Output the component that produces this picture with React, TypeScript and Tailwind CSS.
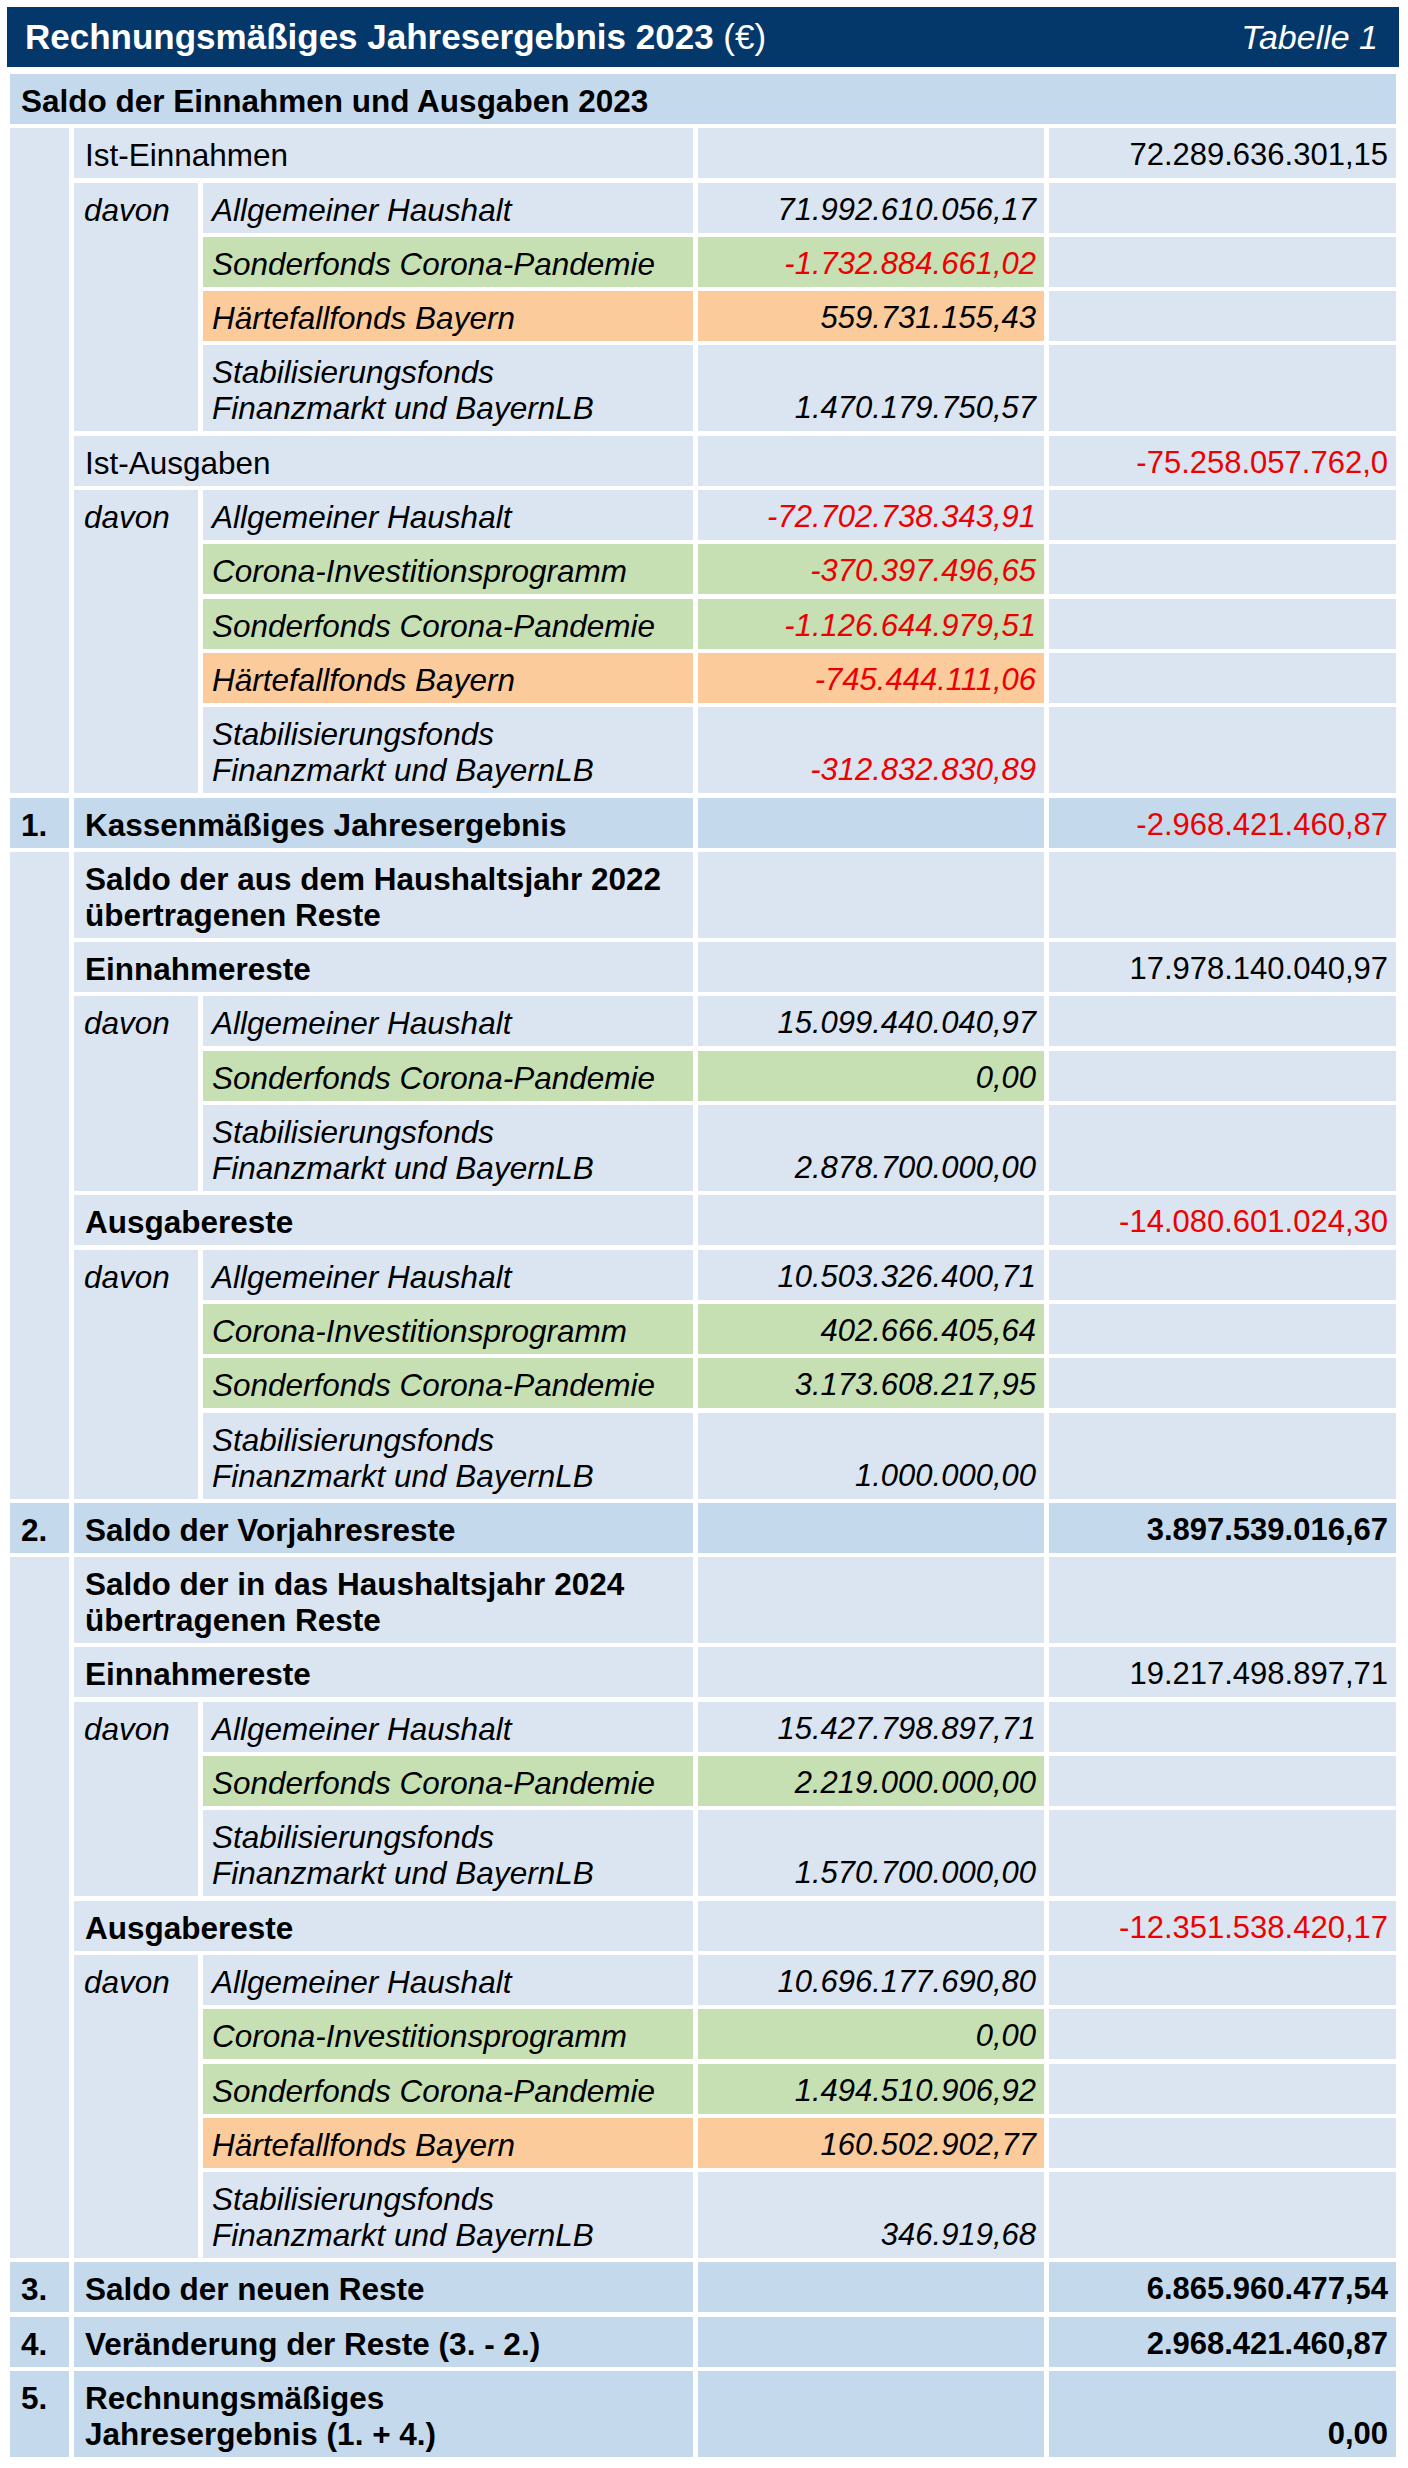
import React from "react";

type Bg = "l" | "m" | "g" | "o";
const BG: Record<Bg, string> = {
  l: "bg-[#dae5f1]",
  m: "bg-[#c5d9ec]",
  g: "bg-[#c6e0b4]",
  o: "bg-[#fbcb9c]",
};

const ROWSPAN: Record<number, string> = {
  3: "row-span-3",
  4: "row-span-4",
  5: "row-span-5",
  10: "row-span-10",
  11: "row-span-11",
};

type Sub = { label: string[]; value: string; bg?: Bg; red?: boolean };

function Label({
  children,
  bg = "l",
  span = "",
  tall = false,
  stretch = false,
  className = "",
}: {
  children?: React.ReactNode;
  bg?: Bg;
  span?: string;
  tall?: boolean;
  stretch?: boolean;
  className?: string;
}) {
  const h = stretch ? "" : tall ? "h-[86px]" : "h-[50px]";
  return (
    <div className={`${BG[bg]} ${span} ${h} pr-[8px] pt-[9px] leading-[36px] text-[31.5px] ${className}`}>
      {children}
    </div>
  );
}

function Value({
  children,
  bg = "l",
  className = "",
}: {
  children?: React.ReactNode;
  bg?: Bg;
  className?: string;
}) {
  return (
    <div
      className={`${BG[bg]} flex items-end justify-end pr-[8px] pb-[5px] leading-[36px] whitespace-nowrap ${className}`}
    >
      {children}
    </div>
  );
}

function SubRows({ items }: { items: Sub[] }) {
  return (
    <>
      <Label span={ROWSPAN[items.length]} stretch className="italic pl-[10px]">
        davon
      </Label>
      {items.map((it, i) => {
        const tall = it.label.length > 1;
        return (
          <React.Fragment key={i}>
            <Label bg={it.bg ?? "l"} tall={tall} className="italic whitespace-nowrap pl-[9px]">
              {it.label.map((l, j) => (
                <div key={j}>{l}</div>
              ))}
            </Label>
            <Value bg={it.bg ?? "l"} className={`italic ${it.red ? "text-[#ee0000]" : ""}`}>
              {it.value}
            </Value>
            <Value />
          </React.Fragment>
        );
      })}
    </>
  );
}

const STAB = ["Stabilisierungsfonds", "Finanzmarkt und BayernLB"];

function Group({
  label,
  labelClass = "",
  value,
  valueClass = "",
  tall = false,
}: {
  label: React.ReactNode;
  labelClass?: string;
  value?: string;
  valueClass?: string;
  tall?: boolean;
}) {
  return (
    <>
      <Label span="col-span-2" tall={tall} className={`whitespace-nowrap pl-[11px] ${labelClass}`}>
        {label}
      </Label>
      <Value />
      <Value className={valueClass}>{value}</Value>
    </>
  );
}

function Total({
  num,
  label,
  value,
  valueClass = "",
  tall = false,
}: {
  num: string;
  label: React.ReactNode;
  value: string;
  valueClass?: string;
  tall?: boolean;
}) {
  return (
    <>
      <Label bg="m" tall={tall} className="font-bold pl-[11px]">
        {num}
      </Label>
      <Label bg="m" span="col-span-2" tall={tall} className="font-bold whitespace-nowrap pl-[11px]">
        {label}
      </Label>
      <Value bg="m" />
      <Value bg="m" className={valueClass}>
        {value}
      </Value>
    </>
  );
}

export default function App() {
  return (
    <div
      className="w-[1408px] h-[2468px] bg-white text-black text-[31px]"
      style={{ fontFamily: '"Liberation Sans", Arial, sans-serif' }}
    >
      <div className="ml-[7px] mt-[7px] w-[1392px] h-[60px] bg-[#04386b] text-white flex items-center justify-between pl-[18px] pr-[21px]">
        <div className="text-[35px]">
          <span className="font-bold">Rechnungsmäßiges Jahresergebnis 2023</span> (€)
        </div>
        <div className="text-[34px] italic">Tabelle 1</div>
      </div>

      <div className="ml-[10px] mt-[7px] w-[1386px] grid grid-cols-[59px_124px_490px_346px_347px] gap-x-[5px] gap-y-[4.3px]">
        <Label bg="m" span="col-span-5" className="font-bold pl-[11px]">
          Saldo der Einnahmen und Ausgaben 2023
        </Label>

        {/* Section 1 */}
        <Label span={ROWSPAN[11]} stretch />
        <Group label="Ist-Einnahmen" value="72.289.636.301,15" />
        <SubRows
          items={[
            { label: ["Allgemeiner Haushalt"], value: "71.992.610.056,17" },
            { label: ["Sonderfonds Corona-Pandemie"], value: "-1.732.884.661,02", bg: "g", red: true },
            { label: ["Härtefallfonds Bayern"], value: "559.731.155,43", bg: "o" },
            { label: STAB, value: "1.470.179.750,57" },
          ]}
        />
        <Group label="Ist-Ausgaben" value="-75.258.057.762,0" valueClass="text-[#ee0000]" />
        <SubRows
          items={[
            { label: ["Allgemeiner Haushalt"], value: "-72.702.738.343,91", red: true },
            { label: ["Corona-Investitionsprogramm"], value: "-370.397.496,65", bg: "g", red: true },
            { label: ["Sonderfonds Corona-Pandemie"], value: "-1.126.644.979,51", bg: "g", red: true },
            { label: ["Härtefallfonds Bayern"], value: "-745.444.111,06", bg: "o", red: true },
            { label: STAB, value: "-312.832.830,89", red: true },
          ]}
        />
        <Total
          num="1."
          label="Kassenmäßiges Jahresergebnis"
          value="-2.968.421.460,87"
          valueClass="text-[#ee0000]"
        />

        {/* Section 2 */}
        <Label span={ROWSPAN[10]} stretch />
        <Group
          tall
          labelClass="font-bold"
          label={
            <>
              <div>Saldo der aus dem Haushaltsjahr 2022</div>
              <div>übertragenen Reste</div>
            </>
          }
        />
        <Group label="Einnahmereste" labelClass="font-bold" value="17.978.140.040,97" />
        <SubRows
          items={[
            { label: ["Allgemeiner Haushalt"], value: "15.099.440.040,97" },
            { label: ["Sonderfonds Corona-Pandemie"], value: "0,00", bg: "g" },
            { label: STAB, value: "2.878.700.000,00" },
          ]}
        />
        <Group
          label="Ausgabereste"
          labelClass="font-bold"
          value="-14.080.601.024,30"
          valueClass="text-[#ee0000]"
        />
        <SubRows
          items={[
            { label: ["Allgemeiner Haushalt"], value: "10.503.326.400,71" },
            { label: ["Corona-Investitionsprogramm"], value: "402.666.405,64", bg: "g" },
            { label: ["Sonderfonds Corona-Pandemie"], value: "3.173.608.217,95", bg: "g" },
            { label: STAB, value: "1.000.000,00" },
          ]}
        />
        <Total num="2." label="Saldo der Vorjahresreste" value="3.897.539.016,67" valueClass="font-bold" />

        {/* Section 3 */}
        <Label span={ROWSPAN[11]} stretch />
        <Group
          tall
          labelClass="font-bold"
          label={
            <>
              <div>Saldo der in das Haushaltsjahr 2024</div>
              <div>übertragenen Reste</div>
            </>
          }
        />
        <Group label="Einnahmereste" labelClass="font-bold" value="19.217.498.897,71" />
        <SubRows
          items={[
            { label: ["Allgemeiner Haushalt"], value: "15.427.798.897,71" },
            { label: ["Sonderfonds Corona-Pandemie"], value: "2.219.000.000,00", bg: "g" },
            { label: STAB, value: "1.570.700.000,00" },
          ]}
        />
        <Group
          label="Ausgabereste"
          labelClass="font-bold"
          value="-12.351.538.420,17"
          valueClass="text-[#ee0000]"
        />
        <SubRows
          items={[
            { label: ["Allgemeiner Haushalt"], value: "10.696.177.690,80" },
            { label: ["Corona-Investitionsprogramm"], value: "0,00", bg: "g" },
            { label: ["Sonderfonds Corona-Pandemie"], value: "1.494.510.906,92", bg: "g" },
            { label: ["Härtefallfonds Bayern"], value: "160.502.902,77", bg: "o" },
            { label: STAB, value: "346.919,68" },
          ]}
        />
        <Total num="3." label="Saldo der neuen Reste" value="6.865.960.477,54" valueClass="font-bold" />
        <Total num="4." label="Veränderung der Reste (3. - 2.)" value="2.968.421.460,87" valueClass="font-bold" />
        <Total
          num="5."
          tall
          label={
            <>
              <div>Rechnungsmäßiges</div>
              <div>Jahresergebnis (1. + 4.)</div>
            </>
          }
          value="0,00"
          valueClass="font-bold"
        />
      </div>
    </div>
  );
}
